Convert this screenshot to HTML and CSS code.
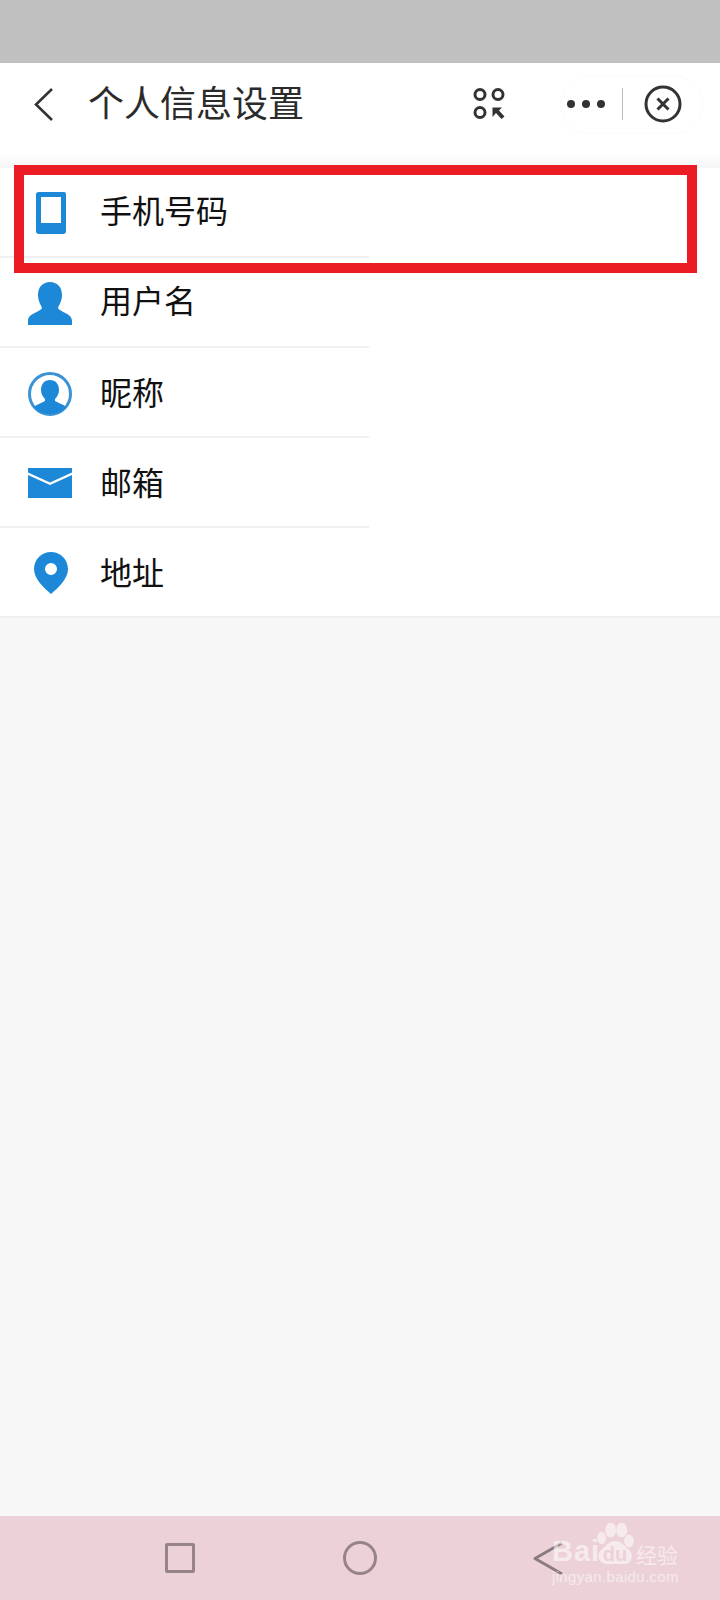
FILE: index.html
```html
<!DOCTYPE html>
<html lang="zh-CN">

<head>
    <meta charset="UTF-8">
    <meta name="viewport" content="width=device-width, initial-scale=1.0">
    <title>个人信息设置</title>
    <link rel="stylesheet" href="styles.css">
</head>

<body>
    <div class="status-bar"></div>

    <div class="header">
        <svg class="back" width="21" height="35" viewBox="0 0 21 35">
            <path d="M19 2 L3 17.5 L19 33" fill="none" stroke="#333" stroke-width="2.6" />
        </svg>
        <h1 class="title">个人信息设置</h1>
        <svg class="scan" width="32" height="32" viewBox="0 0 32 32">
            <circle cx="7" cy="6.5" r="5" fill="none" stroke="#333" stroke-width="3" />
            <circle cx="25" cy="6.5" r="5" fill="none" stroke="#333" stroke-width="3" />
            <circle cx="7" cy="24.5" r="5" fill="none" stroke="#333" stroke-width="3" />
            <path d="M19.5 19.5 H29 L26 22.5 L31.5 28.5 L28.5 31 L23 25 L19.5 29 Z" fill="#333" />
        </svg>
        <div class="capsule">
            <div class="dots"><span></span><span></span><span></span></div>
            <div class="divider"></div>
            <svg width="38" height="38" viewBox="0 0 38 38">
                <circle cx="19" cy="19" r="17" fill="none" stroke="#333" stroke-width="3" />
                <path d="M13.5 13.5 L24.5 24.5 M24.5 13.5 L13.5 24.5" stroke="#333" stroke-width="3" />
            </svg>
        </div>
    </div>
    <div class="header-shadow"></div>

    <!-- list rows -->
    <div class="list">
        <div class="row row-phone">
            <svg class="icon" width="44" height="44" viewBox="0 0 44 44">
                <path d="M11 0 H36 Q38 0 38 2 V39 Q38 42 35 42 H11 Q8 42 8 39 V2 Q8 0 11 0 Z M13 5 V31 H33 V5 Z" fill="#1e88d8" fill-rule="evenodd" />
            </svg>
            <span>手机号码</span>
        </div>
        <div class="row row-user">
            <svg class="icon" width="44" height="44" viewBox="0 0 44 44">
                <path d="M22 0 C29 0 34 5 34 13 C34 19 31 23 30 26 C33 31 44 31 44 39 V43 H0 V39 C0 31 11 31 14 26 C13 23 10 19 10 13 C10 5 15 0 22 0 Z" fill="#1e88d8" />
            </svg>
            <span>用户名</span>
        </div>
        <div class="row">
            <svg class="icon" width="44" height="44" viewBox="0 0 44 44">
                <circle cx="22" cy="22" r="20.5" fill="#fff" stroke="#3b93d6" stroke-width="3" />
                <path d="M22 8 C27.5 8 31 12 31 18 C31 22 29 25 27 27 V29 C30 31 35 32 38 35 C34 40 28 42 22 42 C16 42 10 40 6 35 C9 32 14 31 17 29 V27 C15 25 13 22 13 18 C13 12 16.5 8 22 8 Z" fill="#1e88d8" />
            </svg>
            <span>昵称</span>
        </div>
        <div class="row">
            <svg class="icon" width="44" height="44" viewBox="0 0 44 44">
                <path d="M0 6 H44 V10.5 L22 20.5 L0 10.5 Z M0 13 L22 23 L44 13 V36 H0 Z" fill="#1e88d8" />
            </svg>
            <span>邮箱</span>
        </div>
        <div class="row">
            <svg class="icon" width="44" height="44" viewBox="0 0 44 44">
                <path d="M23 0 C32 0 40 7 40 17 C40 27 30 36 23 42 C16 36 6 27 6 17 C6 7 14 0 23 0 Z M23 11 A6 6 0 1 0 23 23 A6 6 0 1 0 23 11 Z" fill="#1e88d8" fill-rule="evenodd" />
            </svg>
            <span>地址</span>
        </div>
    </div>

    <div class="content"></div>

    <div class="nav">
        <div class="nav-square"></div>
        <div class="nav-circle"></div>
        <svg class="nav-back" width="32" height="35" viewBox="0 0 32 35">
            <path d="M30 2 L3 17.5 L30 33" fill="none" stroke="#8b7b7f" stroke-width="3" stroke-linejoin="round" />
        </svg>
    </div>

    <!-- red box drawn over the first row -->
    <div class="highlight"></div>

    <!-- watermark -->
    <div class="watermark">
        <div class="wm-top">
            <span class="wm-bai">Bai</span>
            <svg width="38" height="42" viewBox="0 0 38 42">
                <ellipse cx="4.7" cy="15" rx="4.3" ry="6.2" fill="#fff" />
                <ellipse cx="13.7" cy="7" rx="5.5" ry="7.5" fill="#fff" />
                <ellipse cx="24.7" cy="7" rx="5.5" ry="7.5" fill="#fff" />
                <ellipse cx="32" cy="18" rx="4.8" ry="6.5" fill="#fff" />
                <path d="M18 18 C24 18 28 23 32 27 C37 32 35 41 27 41 H10 C2 41 -1 32 4 27 C9 23 12 18 18 18 Z" fill="#fff" />
                <text x="18" y="38" text-anchor="middle" class="wm-du">du</text>
            </svg>
            <span class="wm-jy">经验</span>
        </div>
        <div class="wm-url">jingyan.baidu.com</div>
    </div>
</body>

</html>
```

FILE: styles.css
```css
body {
    font-family: "Noto Sans CJK SC", "Noto Sans", sans-serif;
    background-color: #f7f7f7;
    margin: 0;
    padding: 0;
    width: 720px;
    height: 1600px;
    display: flex;
    flex-direction: column;
    overflow: hidden;
    position: relative;
    color: #111;
}

.status-bar {
    height: 63px;
    background-color: #c0c0c0;
}

.header {
    height: 90px;
    box-sizing: border-box;
    background-color: #fff;
    display: flex;
    align-items: center;
    padding-left: 33px;
    padding-right: 17px;
    padding-bottom: 8px;
}

.back {
    margin-right: 34px;
}

.title {
    font-size: 36px;
    font-weight: 400;
    color: #2b2b2b;
    margin: -6px 0 0;
    flex: 1;
    line-height: 1;
}

.scan {
    margin-right: 55px;
}

.capsule {
    width: 143px;
    height: 59px;
    box-sizing: border-box;
    border: 1px solid #fbfbfb;
    border-radius: 30px;
    display: flex;
    align-items: center;
    padding-left: 6px;
}

.dots {
    display: flex;
    gap: 7px;
}

.dots span {
    width: 8px;
    height: 8px;
    border-radius: 50%;
    background-color: #333;
}

.divider {
    width: 1px;
    height: 32px;
    background-color: #bbb;
    margin-left: 17px;
    margin-right: 21px;
}

.header-shadow {
    height: 15px;
    background: linear-gradient(#fff, #f5f5f5);
}

.list {
    background-color: #fff;
    border-bottom: 2px solid #f0f0f0;
}

.row {
    height: 88px;
    display: flex;
    align-items: center;
    gap: 28px;
    padding-left: 28px;
    font-size: 32px;
    position: relative;
    margin-bottom: 2px;
}

.row span {
    line-height: 1;
    margin-top: -3px;
}

.row .icon {
    margin-top: 3px;
}

/* short separator, only under the left half */
.row::after {
    content: "";
    position: absolute;
    left: 0;
    bottom: -2px;
    width: 369px;
    height: 2px;
    background-color: #f0f0f0;
}

.row:last-child {
    margin-bottom: 0;
}

.row:last-child::after {
    display: none;
}

.row-phone span {
    margin-top: -6px;
}

.row-user span {
    margin-top: -6px;
}

.content {
    flex: 1;
}

.nav {
    height: 84px;
    background-color: #ecd2d8;
    display: flex;
    align-items: center;
    padding-left: 165px;
}

.nav-square {
    width: 30px;
    height: 30px;
    box-sizing: border-box;
    border: 3px solid #968488;
    border-radius: 2px;
}

.nav-circle {
    width: 34px;
    height: 34px;
    box-sizing: border-box;
    border: 3px solid #968488;
    border-radius: 50%;
    margin-left: 148px;
}

.nav-back {
    margin-left: 155px;
}

.highlight {
    position: absolute;
    left: 14px;
    top: 165px;
    width: 683px;
    height: 108px;
    box-sizing: border-box;
    border: 10px solid #ec1c24;
}

.watermark {
    position: absolute;
    left: 552px;
    top: 1523px;
    width: 130px;
    color: #fff;
    opacity: 0.55;
}

.wm-top {
    display: flex;
    align-items: flex-end;
    height: 42px;
}

.wm-bai {
    font-family: "Liberation Sans", sans-serif;
    font-size: 29px;
    font-weight: 700;
    letter-spacing: 1px;
    line-height: 1;
    width: 45px;
    margin-bottom: -1px;
}

.wm-du {
    font-family: "Liberation Sans", sans-serif;
    font-size: 20px;
    font-weight: 700;
    fill: #ecd2d8;
}

.wm-jy {
    font-size: 21px;
    line-height: 1;
    margin-left: 1px;
}

.wm-url {
    font-family: "Liberation Sans", sans-serif;
    font-size: 15px;
    letter-spacing: 0.35px;
    line-height: 1;
    margin-top: 4px;
    white-space: nowrap;
}
```
